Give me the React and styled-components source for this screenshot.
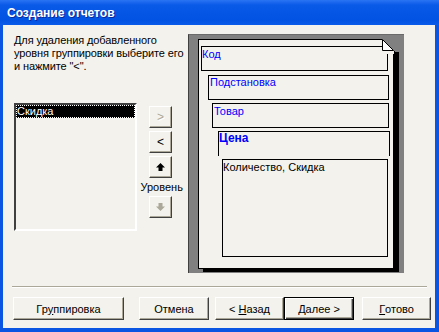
import React from 'react';
import styled, { createGlobalStyle } from 'styled-components';

const GlobalStyle = createGlobalStyle`
  body {
    margin: 0;
    font-family: "Liberation Sans", Arial, sans-serif;
    font-size: 11px;
  }
`;

const Window = styled.div`
  width: 439px;
  height: 332px;
  display: flex;
  flex-direction: column;
  background: #0a55e2;
  overflow: hidden;
`;

const TitleBar = styled.div`
  height: 25px;
  display: flex;
  align-items: center;
  padding-left: 7px;
  background: linear-gradient(180deg, #2a74f4 0%, #0a5ae8 20%, #0252e3 80%, #0a5bea 100%);
`;

const Title = styled.span`
  color: #fff;
  font-weight: bold;
  font-size: 12px;
  text-shadow: 1px 1px 0 #0a2a9a;
`;

const Body = styled.div`
  flex: 1;
  margin: 0 4px 4px 3px;
  background: #f3f2ec;
  padding: 9px 0 0 11px;
  box-sizing: border-box;
`;

const TopArea = styled.div`
  display: flex;
  height: 239px;
`;

const LeftCol = styled.div`
  width: 174px;
`;

const Hint = styled.div`
  line-height: 13px;
  color: #000;
  letter-spacing: -0.1px;
`;

const ListRow = styled.div`
  display: flex;
  margin-top: 30px;
  gap: 12px;
`;

const ListBox = styled.div`
  width: 123px;
  height: 128px;
  box-sizing: border-box;
  border-style: solid;
  border-width: 2px;
  border-color: #404040 #fff #fff #404040;
  background: #f3f2ec;
`;

const ListItem = styled.div`
  height: 13px;
  line-height: 13px;
  padding-left: 1px;
  background: ${p => (p.$selected ? '#000' : 'transparent')};
  color: ${p => (p.$selected ? '#fff' : '#000')};
  outline: ${p => (p.$selected ? '1px dotted #fff' : 'none')};
  outline-offset: -1px;
`;

const SideButtons = styled.div`
  width: 23px;
  display: flex;
  flex-direction: column;
  align-items: center;
  gap: 3px;
  padding-top: 3px;
`;

const SmallButton = styled.div`
  width: 23px;
  height: 22px;
  box-sizing: border-box;
  display: flex;
  align-items: center;
  justify-content: center;
  border: 1px solid;
  border-color: #fff #404040 #404040 #fff;
  box-shadow: inset -1px -1px 0 #aca899;
  color: ${p => (p.$disabled ? '#aca899' : '#000')};
  text-shadow: ${p => (p.$disabled ? '1px 1px 0 #fff' : 'none')};
  font-size: 12px;
`;

const LevelLabel = styled.div`
  width: 40px;
  text-align: center;
  line-height: 14px;
  margin: -1px 0;
`;

const Preview = styled.div`
  width: 216px;
  height: 239px;
  box-sizing: border-box;
  background: #808080;
  border-top: 1px solid #6a6a6a;
  border-left: 1px solid #404040;
  padding: 4px 0 0 9px;
`;

const Page = styled.div`
  position: relative;
  width: 196px;
  height: 230px;
  box-sizing: border-box;
  border: 1px solid #000;
  background: #f3f2ec;
  box-shadow: 5px 3px 0 #000;
  padding-top: 6px;
`;

const Fold = styled.svg`
  position: absolute;
  top: -1px;
  right: -7px;
`;

const Group = styled.div`
  height: ${p => p.$height}px;
  box-sizing: border-box;
  margin: ${p => p.$gap}px ${p => p.$right}px 0 ${p => p.$left}px;
  border: 1px solid #000;
  border-bottom: ${p => (p.$open ? 'none' : '1px solid #000')};
  padding: ${p => p.$padTop}px 0 0 ${p => p.$padLeft}px;
  line-height: 13px;
  color: ${p => (p.$blue ? '#0000ff' : '#000')};
  font-weight: ${p => (p.$bold ? 'bold' : 'normal')};
  font-size: ${p => (p.$bold ? '12px' : '11px')};
`;

const Separator = styled.div`
  margin: 13px 8px 0 -2px;
  height: 1px;
  background: #aca899;
  border-bottom: 1px solid #fff;
`;

const ButtonRow = styled.div`
  display: flex;
  margin: 9px 0 0 -1px;
`;

const Button = styled.div`
  width: ${p => p.$width}px;
  height: 23px;
  margin-left: ${p => p.$gap}px;
  box-sizing: border-box;
  display: flex;
  align-items: center;
  justify-content: center;
  white-space: pre;
  border: 1px solid;
  border-color: ${p => (p.$default ? '#000' : '#fff #404040 #404040 #fff')};
  box-shadow: ${p =>
    p.$default
      ? 'inset 1px 1px 0 #fff, inset -1px -1px 0 #404040, inset -2px -2px 0 #aca899'
      : 'inset -1px -1px 0 #aca899'};
  color: #000;

  u {
    text-decoration: underline;
  }
`;

function ArrowIcon({ down, color }) {
  return (
    <svg width="9" height="8" viewBox="0 0 9 8">
      <polygon
        points="4.5,0 9,4.5 6.5,4.5 6.5,8 2.5,8 2.5,4.5 0,4.5"
        fill={color}
        transform={down ? 'rotate(180 4.5 4)' : undefined}
      />
    </svg>
  );
}

export default function App() {
  return (
    <>
      <GlobalStyle />
      <Window>
        <TitleBar>
          <Title>Создание отчетов</Title>
        </TitleBar>
        <Body>
          <TopArea>
            <LeftCol>
              <Hint>
                Для удаления добавленного
                <br />
                уровня группировки выберите его
                <br />
                и нажмите "&lt;".
              </Hint>
              <ListRow>
                <ListBox>
                  <ListItem $selected>Скидка</ListItem>
                </ListBox>
                <SideButtons>
                  <SmallButton $disabled>&gt;</SmallButton>
                  <SmallButton>&lt;</SmallButton>
                  <SmallButton>
                    <ArrowIcon color="#000" />
                  </SmallButton>
                  <LevelLabel>Уровень</LevelLabel>
                  <SmallButton>
                    <ArrowIcon down color="#aca899" />
                  </SmallButton>
                </SideButtons>
              </ListRow>
            </LeftCol>
            <Preview>
              <Page>
                <Fold width="18" height="15" viewBox="0 0 18 15">
                  <polygon points="0,0 18,0 18,15 12,15 12,12" fill="#808080" />
                  <polygon points="0,0 12,12 12,15 0,15" fill="#f3f2ec" />
                  <rect x="12" y="13" width="5" height="2" fill="#000" />
                  <line x1="12.5" y1="12" x2="12.5" y2="15" stroke="#000" />
                  <polygon points="0.5,0.5 0.5,11.5 11.5,11.5" fill="#fff" stroke="#000" />
                </Fold>
                <Group $height={25} $gap={0} $left={2} $right={5} $padTop={1} $padLeft={0} $blue>
                  Код
                </Group>
                <Group $height={25} $gap={4} $left={9} $right={4} $padTop={0} $padLeft={1} $blue>
                  Подстановка
                </Group>
                <Group $height={25} $gap={3} $left={13} $right={4} $padTop={1} $padLeft={1} $blue>
                  Товар
                </Group>
                <Group $height={25} $gap={3} $left={19} $right={3} $padTop={0} $padLeft={0} $blue $bold $open>
                  Цена
                </Group>
                <Group $height={98} $gap={3} $left={23} $right={5} $padTop={1} $padLeft={0}>
                  Количество, Скидка
                </Group>
              </Page>
            </Preview>
          </TopArea>
          <Separator />
          <ButtonRow>
            <Button $width={111} $gap={0}>
              Гр<u>у</u>ппировка
            </Button>
            <Button $width={70} $gap={15}>
              Отмена
            </Button>
            <Button $width={69} $gap={6}>
              {'< '}<u>Н</u>азад
            </Button>
            <Button $width={70} $gap={0} $default>
              <u>Д</u>алее{' >'}
            </Button>
            <Button $width={69} $gap={8}>
              <u>Г</u>отово
            </Button>
          </ButtonRow>
        </Body>
      </Window>
    </>
  );
}
